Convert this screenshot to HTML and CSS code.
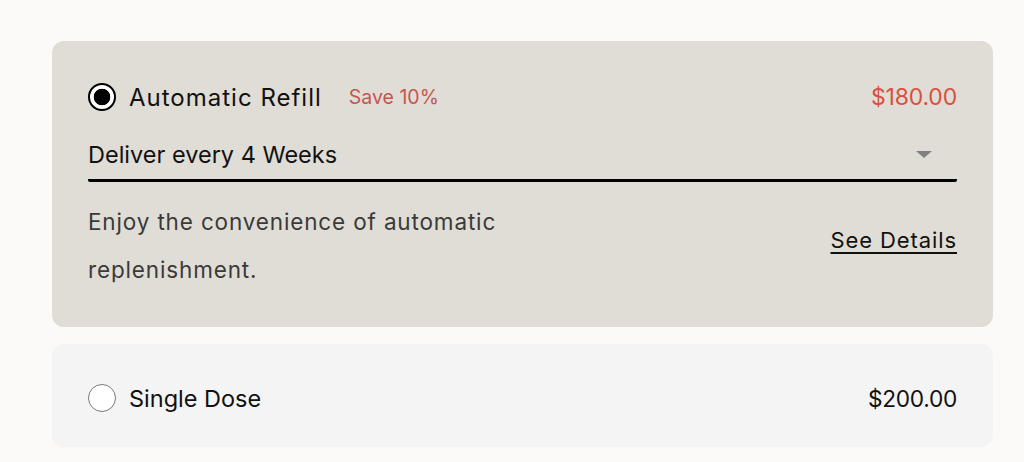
FILE: index.html
```html
<!DOCTYPE html>
<html lang="en">
<head>
<meta charset="utf-8">
<title>Purchase options</title>
<link rel="stylesheet" href="styles.css">
</head>
<body>
<div class="page">
  <section class="card card-active">
    <div class="option-row">
      <span class="radio radio-checked"></span>
      <span class="option-title option-title-wide">Automatic Refill</span>
      <span class="save">Save 10%</span>
      <span class="price price-red">$180.00</span>
    </div>
    <div class="select">
      <span class="select-text">Deliver every 4 Weeks</span>
      <span class="caret"></span>
    </div>
    <div class="desc-row">
      <p class="desc">Enjoy the convenience of automatic replenishment.</p>
      <a class="details" href="#">See Details</a>
    </div>
  </section>
  <section class="card card-idle">
    <div class="option-row">
      <span class="radio"></span>
      <span class="option-title option-title-single">Single Dose</span>
      <span class="price">$200.00</span>
    </div>
  </section>
</div>
</body>
</html>
```

FILE: styles.css
```css
* { box-sizing: border-box; }
html, body { margin: 0; padding: 0; }
body {
  background: #fbfaf8;
  font-family: Inter, "Liberation Sans", sans-serif;
  color: #111;
  width: 1024px;
  height: 462px;
  overflow: hidden;
}
.page {
  padding: 41px 31px 0 52px;
  display: flex;
  flex-direction: column;
  gap: 17px;
}
.card {
  border-radius: 12px;
  padding: 0 36px;
}
.card-active {
  background: #e0ddd6;
  padding-top: 42px;
  padding-bottom: 33px;
}
.card-idle {
  background: #f4f4f4;
  padding-top: 40px;
  padding-bottom: 35px;
}
.option-row {
  display: flex;
  align-items: center;
  height: 28px;
}
.radio {
  width: 28px;
  height: 28px;
  border-radius: 50%;
  background: #fff;
  border: 1.5px solid #7a7a7a;
  flex: none;
  margin-right: 13px;
}
.radio-checked {
  border: 2px solid #000;
  background: radial-gradient(circle, #000 0 8px, #fff 8.6px);
}
.option-title {
  font-size: 24px;
  color: #111;
}
.option-title-wide {
  letter-spacing: 1px;
}
.option-title-single {
  font-size: 23.5px;
}
.save {
  font-size: 19.5px;
  color: #c6554f;
  margin-left: 27px;
}
.price {
  margin-left: auto;
  font-size: 23px;
  letter-spacing: -0.2px;
  color: #111;
}
.card-idle .price {
  font-size: 22.7px;
  letter-spacing: -0.3px;
}
.price-red { color: #d8513e; }
.select {
  margin-top: 19px;
  height: 52px;
  border-bottom: 3px solid #000;
  border-radius: 0 0 2px 2px;
  display: flex;
  align-items: center;
  justify-content: space-between;
  padding-right: 25px;
}
.select-text {
  font-size: 23.5px;
  color: #111;
}
.caret {
  width: 0;
  height: 0;
  border-left: 8px solid transparent;
  border-right: 8px solid transparent;
  border-top: 7px solid #808080;
}
.desc-row {
  margin-top: 16px;
  display: flex;
  justify-content: space-between;
  align-items: flex-start;
}
.desc {
  margin: 0;
  width: 470px;
  font-size: 22.5px;
  letter-spacing: 0.85px;
  line-height: 48px;
  color: #3a3a3a;
}
.details {
  margin-top: 18px;
  font-size: 22px;
  letter-spacing: 0.9px;
  line-height: 48px;
  color: #111;
  text-decoration: underline;
  text-decoration-thickness: 2px;
  text-underline-offset: 4px;
}
```
